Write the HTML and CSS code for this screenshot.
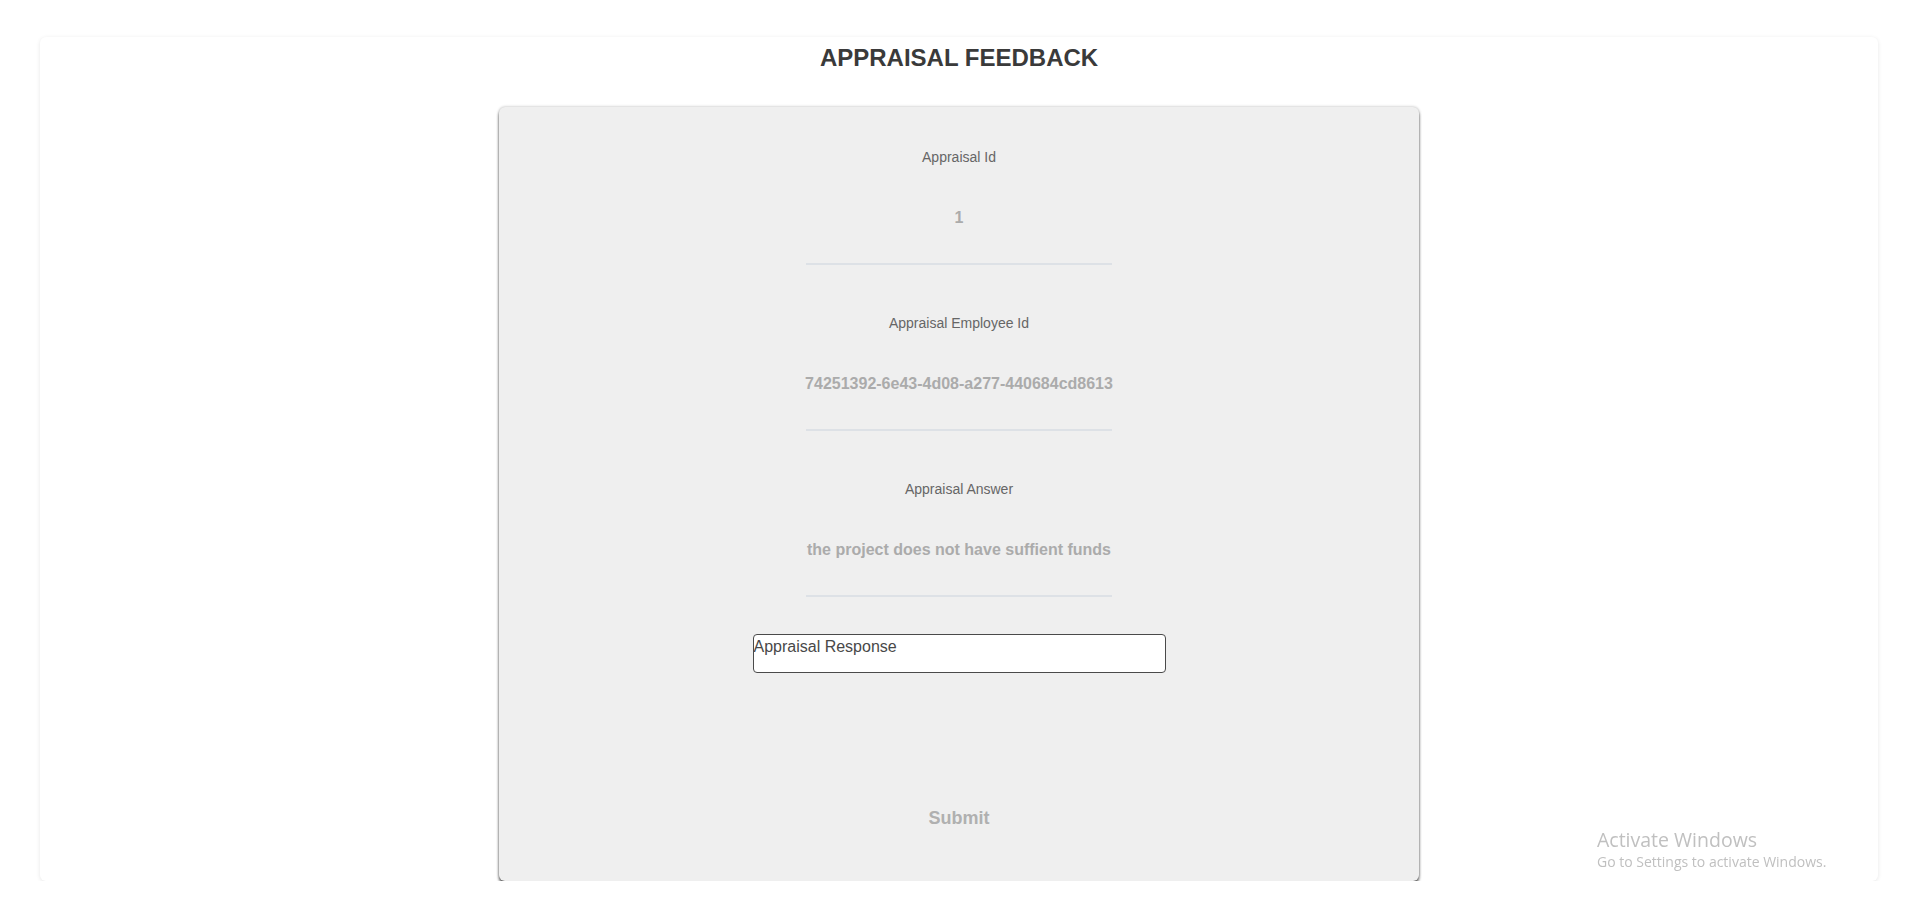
FILE: index.html
```html
<!DOCTYPE html>
<html lang="en">
<head>
<meta charset="utf-8">
<title>Appraisal Feedback</title>
<link rel="stylesheet" href="styles.css">
</head>
<body>
<div class="page">
  <h1 class="title">APPRAISAL FEEDBACK</h1>
  <form class="card">
    <div class="field">
      <div class="field-label">Appraisal Id</div>
      <div class="field-value">1</div>
      <div class="field-line"></div>
    </div>
    <div class="field">
      <div class="field-label">Appraisal Employee Id</div>
      <div class="field-value">74251392-6e43-4d08-a277-440684cd8613</div>
      <div class="field-line"></div>
    </div>
    <div class="field">
      <div class="field-label">Appraisal Answer</div>
      <div class="field-value">the project does not have suffient funds</div>
      <div class="field-line"></div>
    </div>
    <textarea class="response" placeholder="Appraisal Response"></textarea>
    <button type="button" class="submit">Submit</button>
  </form>
</div>
<div class="watermark">
  <div class="wm-title">Activate Windows</div>
  <div class="wm-sub">Go to Settings to activate Windows.</div>
</div>
</body>
</html>
```
FILE: styles.css
```css
html, body {
  margin: 0;
  padding: 0;
  background: #ffffff;
  font-family: "Liberation Sans", Arial, sans-serif;
}

.page {
  margin: 37px 41px 0 40px;
  height: 844px;
  background: #ffffff;
  border-radius: 6px;
  box-shadow: 0 1px 4px rgba(0, 0, 0, 0.1);
  display: flex;
  flex-direction: column;
  align-items: center;
}

.title {
  margin: 7px 0 35px;
  font-size: 24px;
  line-height: 28px;
  font-weight: bold;
  color: #3a3a3a;
  text-align: center;
}

.card {
  width: 920px;
  height: 774px;
  box-sizing: border-box;
  padding-top: 42px;
  background: #efefef;
  border-radius: 6px;
  box-shadow: 0 3px 3px rgba(0, 0, 0, 0.6), 0 0 3px rgba(0, 0, 0, 0.3);
  display: flex;
  flex-direction: column;
  align-items: center;
  position: relative;
}

.field {
  display: flex;
  flex-direction: column;
  align-items: center;
  margin-bottom: 50px;
}

.field:last-of-type {
  margin-bottom: 37px;
}

.field-label {
  font-size: 14px;
  line-height: 16px;
  color: #666666;
}

.field-value {
  margin-top: 43px;
  font-size: 16px;
  line-height: 20px;
  font-weight: bold;
  color: #ababab;
}

.field-line {
  margin-top: 35px;
  width: 306px;
  height: 2px;
  background: #dde1e6;
}

.response {
  width: 413px;
  height: 39px;
  box-sizing: border-box;
  margin: 0;
  padding: 2px 0 0 0;
  border: 1px solid #4a4a4a;
  border-radius: 4px;
  background: #ffffff;
  font-family: "Liberation Sans", Arial, sans-serif;
  font-size: 16px;
  line-height: 20px;
  color: #333;
  resize: none;
  outline: none;
}

.response::placeholder {
  color: #484848;
  opacity: 1;
}

.submit {
  margin-top: 134px;
  padding: 0;
  border: 0;
  background: transparent;
  font-family: "Liberation Sans", Arial, sans-serif;
  font-size: 18px;
  line-height: 22px;
  font-weight: bold;
  color: #b0b0b0;
}

.watermark {
  position: fixed;
  left: 1597px;
  top: 827px;
  color: #c0c0c0;
  font-family: "Open Sans", "Noto Sans", sans-serif;
}

.wm-title {
  font-size: 19.5px;
  line-height: 26px;
}

.wm-sub {
  font-size: 14px;
  line-height: 18px;
}
```
